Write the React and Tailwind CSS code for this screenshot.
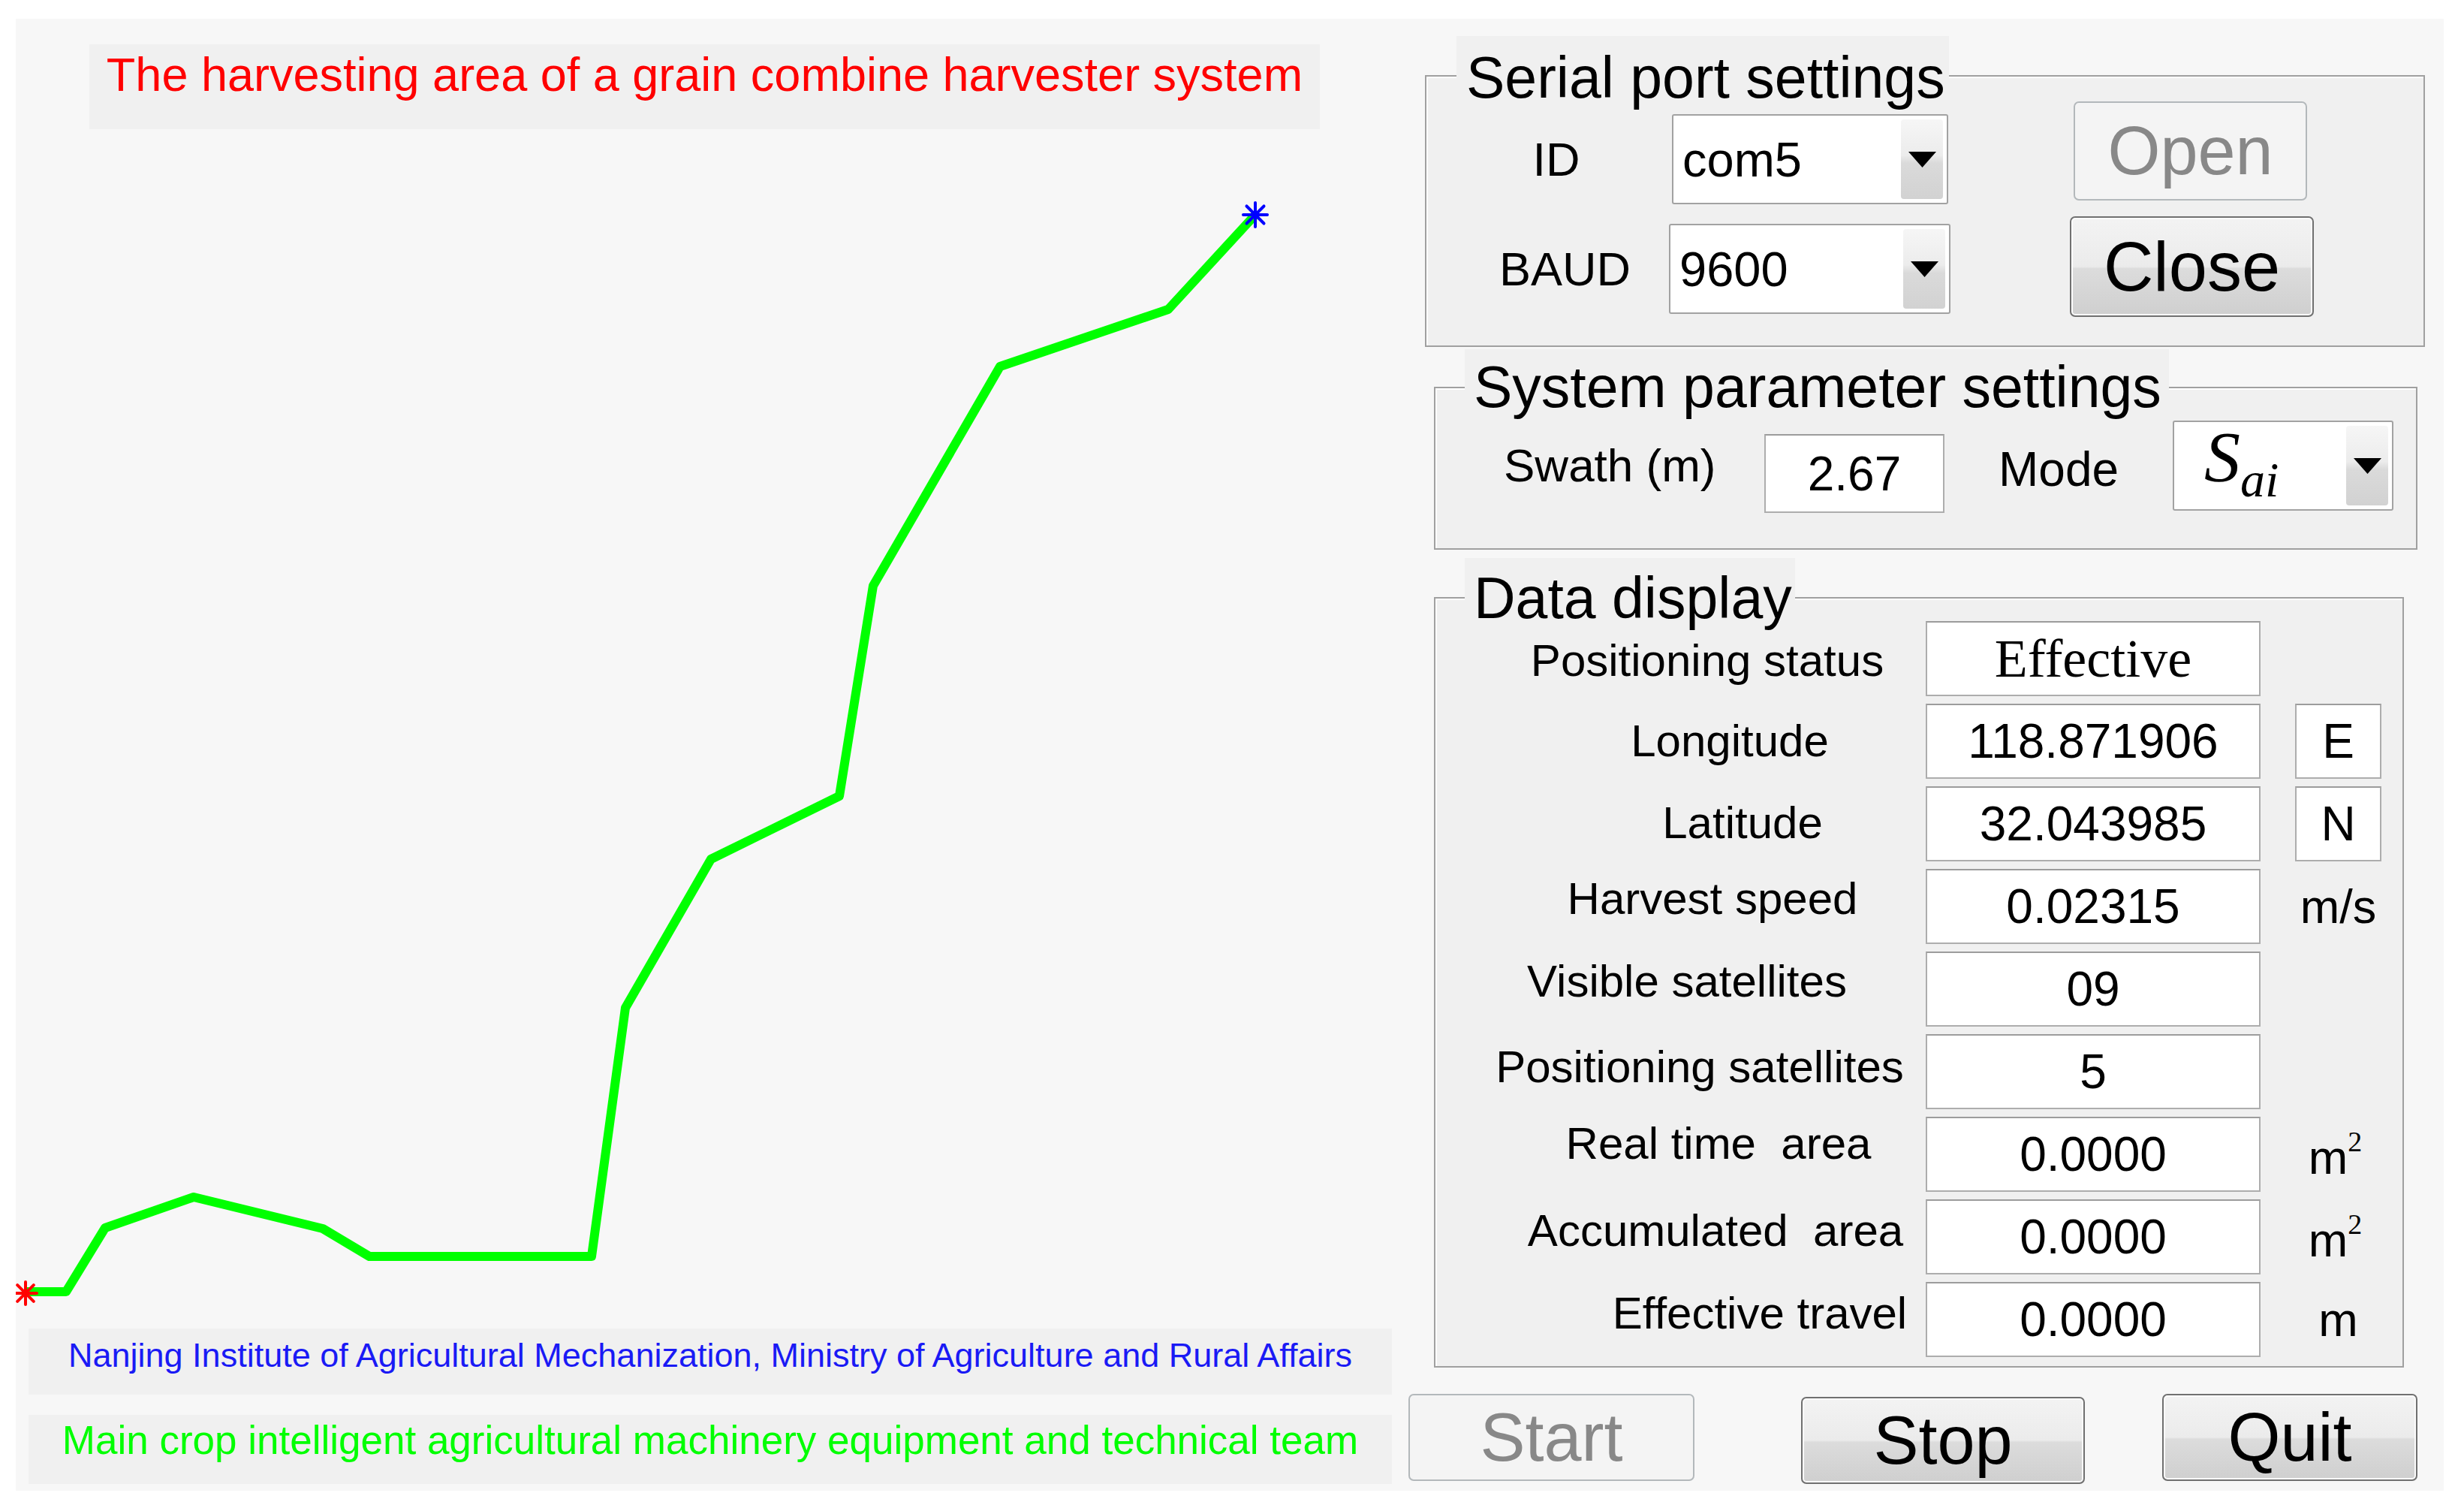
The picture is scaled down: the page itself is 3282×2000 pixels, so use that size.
import React from "react";

const SANS = "font-['Liberation_Sans',Arial,sans-serif]";
const SERIF = "font-['Liberation_Serif','Times_New_Roman',serif]";

// track of the harvester, in px relative to the plot area
const track = [
  [12, 1548], [67, 1548], [119, 1463], [237, 1422], [409, 1464], [471, 1501],
  [767, 1501], [812, 1170], [926, 972], [1097, 888], [1142, 608], [1311, 316],
  [1535, 240], [1651, 114],
];

const rows = [
  { label: "Positioning status", value: "Effective", serif: true, pl: "pl-[71px] pt-[6px]" },
  { label: "Longitude", value: "118.871906", unit: "E", boxed: true, pl: "pl-[131px]" },
  { label: "Latitude", value: "32.043985", unit: "N", boxed: true, pl: "pl-[165px] pb-[3px]" },
  { label: "Harvest speed", value: "0.02315", unit: "m/s", pl: "pl-[85px] pb-[20px]" },
  { label: "Visible satellites", value: "09", pl: "pl-[17px] pb-[20px]" },
  { label: "Positioning satellites", value: "5", pl: "pl-[51px] pb-[12px]" },
  { label: "Real time\u00a0 area", value: "0.0000", unit: "m2", pl: "pl-[101px] pb-[28px]" },
  { label: "Accumulated\u00a0 area", value: "0.0000", unit: "m2", pl: "pl-[93px] pb-[16px]" },
  { label: "Effective travel", value: "0.0000", unit: "m", pl: "pl-[211px] pb-[16px]" },
];

const Star = ({ cx, cy, r, color }) => {
  const d = r * 0.72;
  return (
    <g stroke={color} strokeWidth="4" strokeLinecap="round">
      <line x1={cx - r} y1={cy} x2={cx + r} y2={cy} />
      <line x1={cx} y1={cy - r} x2={cx} y2={cy + r} />
      <line x1={cx - d} y1={cy - d} x2={cx + d} y2={cy + d} />
      <line x1={cx - d} y1={cy + d} x2={cx + d} y2={cy - d} />
      <circle cx={cx} cy={cy} r="5" fill={color} stroke="none" />
    </g>
  );
};

const Arrow = () => (
  <svg width="37" height="21" viewBox="0 0 37 21">
    <polygon points="0,0 37,0 18.5,21" fill="#000" />
  </svg>
);

const Select = ({ className, children }) => (
  <div className={`flex items-stretch bg-white border-2 border-[#a2a2a2] rounded-[3px] ${className}`}>
    <div className="flex-1 flex items-center">{children}</div>
    <div className="w-[56px] my-[5px] mr-[5px] rounded-[4px] bg-[linear-gradient(to_bottom,#f6f6f6_0%,#ececec_45%,#dadada_55%,#d2d2d2_100%)] flex items-center justify-center">
      <Arrow />
    </div>
  </div>
);

const Button = ({ className, disabled, children }) => (
  <div
    className={`flex items-center justify-center rounded-[7px] border-2 leading-none text-[90px] ${
      disabled
        ? "border-[#b3b8bb] bg-[#f4f4f4] text-[#888888]"
        : "border-[#707070] text-black bg-[linear-gradient(to_bottom,#f3f3f3_0%,#ebebeb_50%,#dcdcdc_52%,#cfcfcf_100%)] shadow-[inset_0_0_0_2px_#fbfbfb]"
    } ${className}`}
  >
    {children}
  </div>
);

const Legend = ({ className, children }) => (
  <div className={`absolute bg-[#f0f0f0] leading-none text-[77px] text-black ${className}`}>{children}</div>
);

const Box = ({ className, children }) => (
  <div className={`bg-white border-2 border-[#adadad] border-t-[#9c9c9c] flex items-center justify-center leading-none ${className}`}>
    {children}
  </div>
);

export default function App() {
  const points = track.map((p) => p.join(",")).join(" ");

  return (
    <div className={`w-[3282px] h-[2000px] bg-white pt-[25px] pl-[21px] ${SANS}`}>
      <div className="w-[3234px] h-[1960px] bg-[#f7f7f7] flex">
        {/* left: plot */}
        <div className="w-[1855px] flex flex-col">
          <div className="ml-[98px] mt-[34px] w-[1639px] h-[113px] bg-[#f0f0f0] flex justify-center pt-[9px]">
            <span className="text-[63px] leading-none text-[#ff0000]">
              The harvesting area of a grain combine harvester system
            </span>
          </div>

          <svg width="1855" height="1597" viewBox="0 0 1855 1597" className="block">
            <polyline points={points} fill="none" stroke="#00ff00" strokeWidth="12" strokeLinejoin="round" />
            <Star cx={13} cy={1550} r={15} color="#ff0000" />
            <Star cx={1651} cy={114} r={16} color="#0000ff" />
          </svg>

          <div className="ml-[17px] w-[1816px] h-[88px] bg-[#f0f0f0] flex justify-center pt-[13px]">
            <span className="text-[45px] leading-none text-[#1a1af5]">
              Nanjing Institute of Agricultural Mechanization, Ministry of Agriculture and Rural Affairs
            </span>
          </div>

          <div className="ml-[17px] mt-[27px] w-[1816px] h-[92px] bg-[#f0f0f0] flex justify-center pt-[7px]">
            <span className="text-[53px] leading-none text-[#00ff00]">
              Main crop intelligent agricultural machinery equipment and technical team
            </span>
          </div>
        </div>

        {/* right: controls */}
        <div className="flex-1 flex flex-col">
          {/* serial port */}
          <div className="relative ml-[22px] mt-[75px] w-[1332px] h-[362px] border-2 border-[#a0a0a0] bg-[#f0f0f0] shadow-[inset_2px_2px_0_#ffffff] flex">
            <Legend className="left-[40px] top-[-54px] w-[656px] h-[80px] pt-[17px] pl-[13px]">Serial port settings</Legend>

            <div className="relative flex flex-col">
              <div className="mt-[50px] h-[120px] flex items-center">
                <div className="w-[327px] pl-[19px] text-center text-[63px] leading-none">ID</div>
                <Select className="w-[368px] h-[120px]">
                  <span className="pl-[12px] text-[65px] leading-none">com5</span>
                </Select>
              </div>
              <div className="mt-[26px] h-[120px] flex items-center">
                <div className="w-[323px] pl-[46px] text-center text-[63px] leading-none">BAUD</div>
                <Select className="w-[375px] h-[120px]">
                  <span className="pl-[12px] text-[65px] leading-none">9600</span>
                </Select>
              </div>
            </div>

            <div className="flex flex-col">
              <Button disabled className="ml-[164px] mt-[33px] w-[311px] h-[132px]">Open</Button>
              <Button className="ml-[159px] mt-[21px] w-[325px] h-[134px] text-[92px]">Close</Button>
            </div>
          </div>

          {/* system parameters */}
          <div className="relative ml-[34px] mt-[53px] w-[1310px] h-[217px] border-2 border-[#a0a0a0] bg-[#f0f0f0] shadow-[inset_2px_2px_0_#ffffff] flex items-start">
            <Legend className="left-[39px] top-[-52px] w-[938px] h-[80px] pt-[12px] pl-[12px]">System parameter settings</Legend>

            <div className="relative ml-[91px] mt-[72px] w-[347px] text-[62px] leading-none">Swath (m)</div>
            <Box className="mt-[61px] w-[240px] h-[105px] text-[64px]">2.67</Box>
            <div className="mt-[76px] w-[304px] pl-[72px] text-[64px] leading-none">Mode</div>
            <Select className="mt-[43px] w-[294px] h-[120px]">
              <span className={`pl-[40px] pb-[8px] italic ${SERIF} text-[96px] leading-none text-black`}>
                S<span className="text-[66px] align-[-20px]">ai</span>
              </span>
            </Select>
          </div>

          {/* data display */}
          <div className="relative ml-[34px] mt-[63px] w-[1292px] h-[1026px] border-2 border-[#a0a0a0] bg-[#f0f0f0] shadow-[inset_2px_2px_0_#ffffff] pt-[30px] flex flex-col gap-[10px]">
            <Legend className="left-[39px] top-[-54px] w-[440px] h-[80px] pt-[15px] pl-[12px]">Data display</Legend>

            {rows.map((r) => (
              <div key={r.label} className="relative flex items-center h-[100px]">
                <div className={`w-[653px] text-center text-[60px] leading-none whitespace-pre ${r.pl}`}>
                  {r.label}
                </div>
                <Box className={`w-[446px] h-[100px] ${r.serif ? `${SERIF} text-[72px]` : "text-[64px]"}`}>
                  {r.value}
                </Box>
                {r.unit && r.boxed && (
                  <Box className="ml-[46px] w-[115px] h-[100px] text-[64px]">{r.unit}</Box>
                )}
                {r.unit && !r.boxed && (
                  <div className="ml-[46px] w-[115px] text-center text-[63px] leading-none">
                    {r.unit === "m2" ? (
                      <span className="pr-[8px]">
                        m<span className={`${SERIF} text-[38px] align-[30px]`}>2</span>
                      </span>
                    ) : (
                      r.unit
                    )}
                  </div>
                )}
              </div>
            ))}
          </div>

          {/* bottom buttons */}
          <div className="mt-[35px] flex items-start">
            <Button disabled className="w-[381px] h-[116px]">Start</Button>
            <Button className="ml-[142px] mt-[4px] w-[378px] h-[116px]">Stop</Button>
            <Button className="ml-[103px] w-[340px] h-[116px]">Quit</Button>
          </div>
        </div>
      </div>
    </div>
  );
}
